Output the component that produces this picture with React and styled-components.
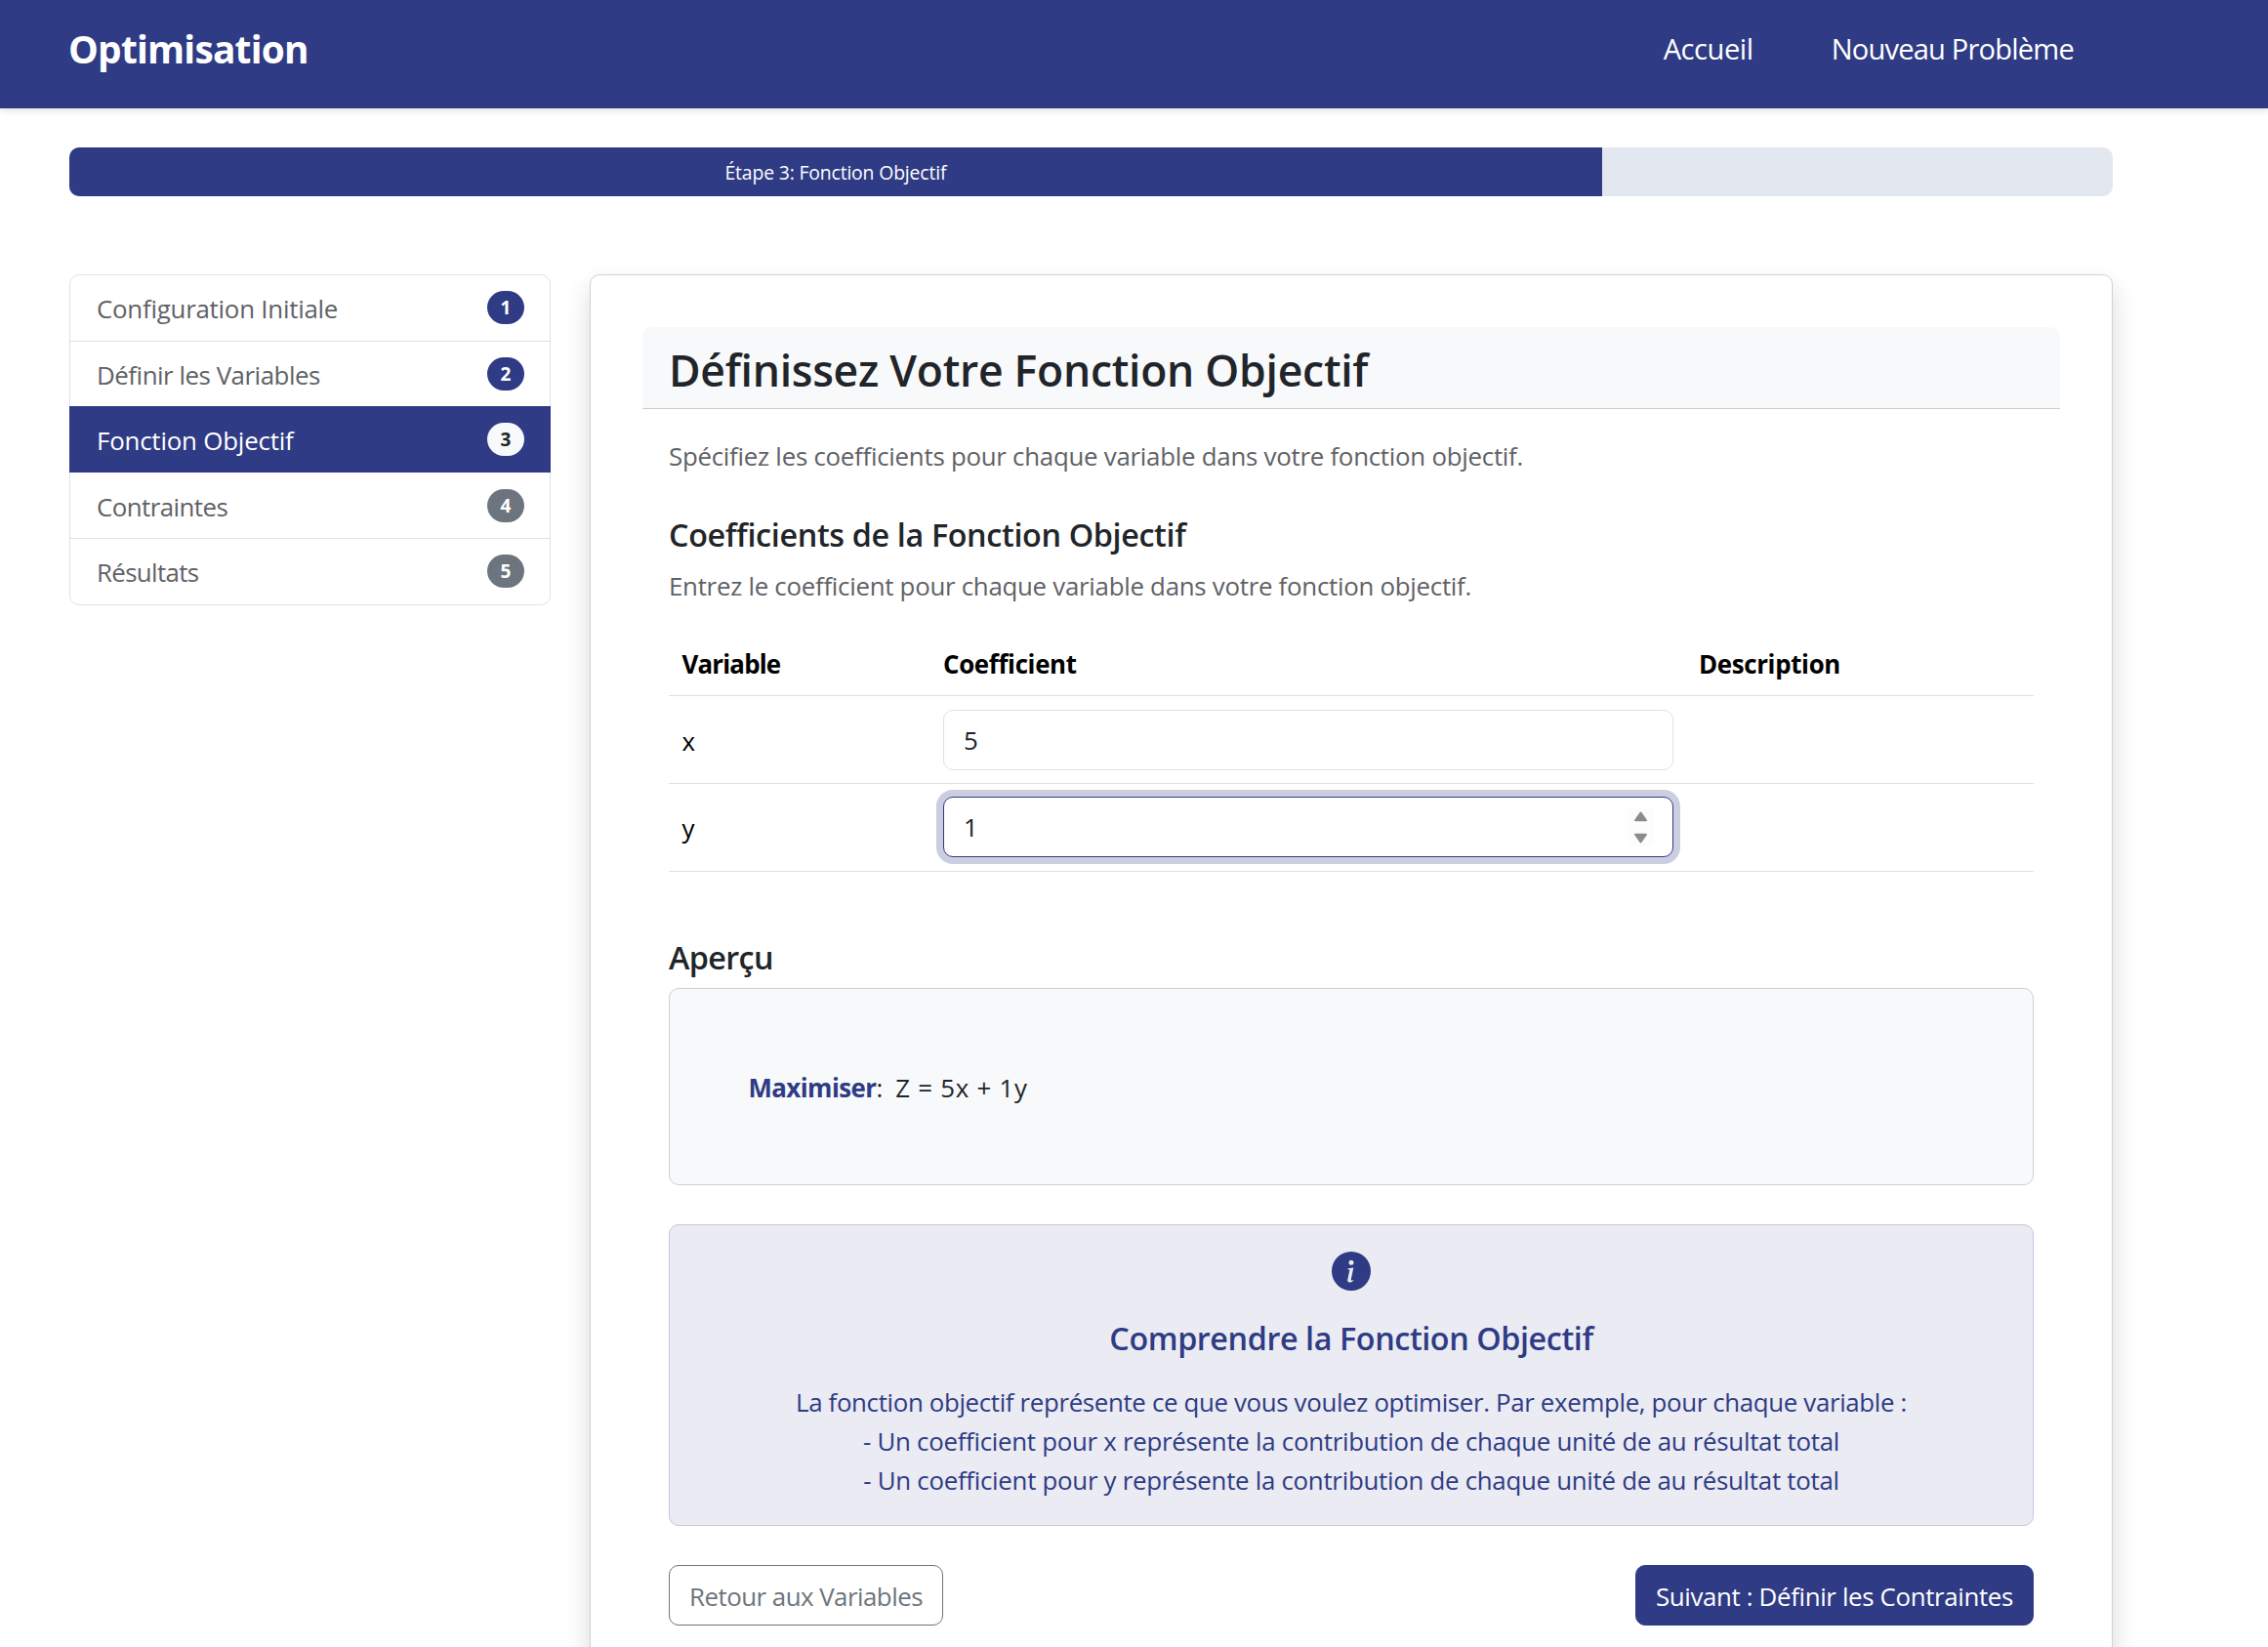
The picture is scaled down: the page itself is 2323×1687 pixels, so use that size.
import React from "react";
import styled, { createGlobalStyle, css } from "styled-components";
import { BsInfoCircleFill } from "react-icons/bs";

const navy = "#2f3b84";

const Global = createGlobalStyle`
  *, *::before, *::after { box-sizing: border-box; }
  html, body { margin: 0; background: #fff; }
  body {
    font-family: "Open Sans", "Noto Sans", sans-serif;
    font-size: 25.87px;
    line-height: 40px;
    color: #212529;
    overflow: hidden;
  }
`;

const tracking = css`
  letter-spacing: ${(p) => p.$ls || 0}px;
  white-space: nowrap;
`;

const Page = styled.div`
  height: 1687px;
  overflow: hidden;
`;

const Header = styled.header`
  display: flex;
  align-items: center;
  justify-content: space-between;
  height: 111px;
  padding: 0 199px 11px 70px;
  background: ${navy};
  color: #fff;
  box-shadow: 0 3px 7px rgba(0, 0, 0, 0.1);
`;

const Brand = styled.a`
  ${tracking}
  font-size: 38.8px;
  font-weight: 700;
`;

const Nav = styled.nav`
  display: flex;
  gap: 80px;
`;

const NavLink = styled.a`
  ${tracking}
  font-size: 29.1px;
`;

const Main = styled.main`
  width: 2093px;
  margin: 40px 0 0 71px;
`;

const Progress = styled.div`
  height: 50px;
  border-radius: 10px;
  background: #e3e8f0;
  overflow: hidden;
`;

const ProgressBar = styled.div`
  ${tracking}
  display: flex;
  align-items: center;
  justify-content: center;
  width: ${(p) => p.$value}%;
  height: 100%;
  padding-top: 2px;
  background: ${navy};
  color: #fff;
  font-size: 19.4px;
`;

const Columns = styled.div`
  display: flex;
  align-items: flex-start;
  gap: 40px;
  margin-top: 80px;
`;

const Steps = styled.ul`
  flex: none;
  width: 493px;
  margin: 0;
  padding: 0;
  list-style: none;
  border: 1px solid #dee2e6;
  border-radius: 10px;
`;

const Step = styled.li`
  display: flex;
  align-items: center;
  justify-content: space-between;
  height: ${(p) => p.$height}px;
  padding: 0 26px 0 27px;
  color: #5f6266;
  border-bottom: ${(p) => (p.$divider ? "1px solid #dee2e6" : "0")};
  ${(p) =>
    p.$active &&
    css`
      margin: 0 -1px;
      padding: 0 27px 0 28px;
      background: ${navy};
      color: #fff;
    `}
`;

const StepLabel = styled.span`
  ${tracking}
  padding-top: ${(p) => p.$top || 1}px;
`;

const tones = {
  done: { bg: navy, fg: "#fff" },
  current: { bg: "#f8f9fa", fg: "#212529" },
  todo: { bg: "#6c757d", fg: "#fff" },
};

const Badge = styled.span`
  display: flex;
  align-items: center;
  justify-content: center;
  width: 38px;
  height: 34px;
  margin-bottom: ${(p) => (p.$raised ? 1 : 0)}px;
  padding-top: 1px;
  border-radius: 17px;
  background: ${(p) => tones[p.$tone].bg};
  color: ${(p) => tones[p.$tone].fg};
  font-size: 19px;
  font-weight: 700;
  line-height: 1;
`;

const Card = styled.section`
  flex: none;
  width: 1560px;
  height: 1480px;
  padding: 53px;
  border: 1px solid #d2d2d3;
  border-radius: 10px;
  background: #fff;
  box-shadow: 0 13px 27px rgba(0, 0, 0, 0.15);
`;

const CardHeader = styled.div`
  height: 84px;
  padding: 4px 26px 0 27px;
  border-bottom: 1px solid #c9cbcd;
  border-radius: 10px 10px 0 0;
  background: #f8f9fb;
`;

const Title = styled.h2`
  ${tracking}
  margin: 0;
  font-size: 44.5px;
  font-weight: 600;
  line-height: 80px;
`;

const CardBody = styled.div`
  padding: 28px 27px 0;
`;

const Lead = styled.p`
  ${tracking}
  margin: 0;
  color: #5f6266;
`;

const Subtitle = styled.h3`
  ${tracking}
  margin: ${(p) => p.$top}px 0 ${(p) => p.$bottom}px;
  font-size: 32.33px;
  font-weight: 600;
  line-height: 40px;
`;

const Table = styled.div`
  margin-top: 27px;
  color: #000;
`;

const Row = styled.div`
  display: grid;
  grid-template-columns: 268px 774px 1fr;
  align-items: center;
  height: ${(p) => (p.$head ? 66 : 90)}px;
  padding-bottom: ${(p) => (p.$last ? 2 : 0)}px;
  border-bottom: 1px solid #dee0e4;
  font-weight: ${(p) => (p.$head ? 700 : 400)};
`;

const Cell = styled.div`
  ${tracking}
  padding: 0 13px;
`;

const NameCell = styled(Cell)`
  padding: ${(p) => (p.$ls ? 0 : 2)}px 13px 0 13.5px;
`;

const Field = styled.div`
  display: flex;
  align-items: center;
  width: 748px;
  height: 62px;
  padding: 0 20px;
  border: 1px solid ${(p) => (p.$focused ? navy : "#dee2e6")};
  border-radius: 10px;
  background: #fff;
  box-shadow: ${(p) => (p.$focused ? "0 0 0 7px #cbcee1" : "none")};
`;

const Input = styled.input`
  flex: 1;
  min-width: 0;
  height: 40px;
  padding: 0;
  border: 0;
  outline: 0;
  background: transparent;
  color: #212529;
  font: inherit;
`;

const Spinner = styled.span`
  display: flex;
  width: 25px;
  height: 40px;
  background: #fcfcfc;
`;

const Preview = styled.div`
  display: flex;
  align-items: center;
  height: 202px;
  padding: 1px 80px 0 80.5px;
  border: 1px solid #cdcfd1;
  border-radius: 10px;
  background: #f8f9fb;
`;

const Goal = styled.strong`
  ${tracking}
  color: ${navy};
`;

const Formula = styled.span`
  ${tracking}
  margin-left: 13px;
`;

const Info = styled.aside`
  display: flex;
  flex-direction: column;
  align-items: center;
  height: 309px;
  margin-top: 40px;
  padding-top: 27px;
  border: 1px solid #c5c7dd;
  border-radius: 10px;
  background: #eaebf3;
  color: ${navy};
`;

const InfoTitle = styled(Subtitle)`
  margin: 28px 0 26px;
`;

const InfoLine = styled.p`
  ${tracking}
  margin: 0;
`;

const Actions = styled.div`
  display: flex;
  justify-content: space-between;
  margin-top: 40px;
`;

const Button = styled.button`
  ${tracking}
  width: ${(p) => p.$width}px;
  height: 62px;
  padding: 2px 0 0;
  border: 1px solid ${(p) => (p.$primary ? navy : "#6c757d")};
  border-radius: 10px;
  background: ${(p) => (p.$primary ? navy : "#fff")};
  color: ${(p) => (p.$primary ? "#fff" : "#6c757d")};
  font-family: inherit;
  font-size: 25.87px;
  line-height: 40px;
`;

const steps = [
  { label: "Configuration Initiale", ls: -0.24, tone: "done", height: 68, divider: true, raised: true },
  { label: "Définir les Variables", ls: -0.47, tone: "done", height: 66 },
  { label: "Fonction Objectif", ls: -0.196, tone: "current", height: 68, active: true },
  { label: "Contraintes", ls: -0.56, tone: "todo", height: 68, divider: true, top: 2 },
  { label: "Résultats", ls: -0.66, tone: "todo", height: 67, raised: true },
];

function Arrows() {
  return (
    <svg width="25" height="40" viewBox="0 0 25 40" fill="#8b8b8b" stroke="#8b8b8b" strokeWidth="2" strokeLinejoin="round">
      <path d="M12.5 5.5 L18 13.3 H7 Z" />
      <path d="M12.5 35.5 L18 27.7 H7 Z" />
    </svg>
  );
}

export default function App() {
  return (
    <Page>
      <Global />
      <Header>
        <Brand $ls={-0.77}>Optimisation</Brand>
        <Nav>
          <NavLink $ls={-0.45}>Accueil</NavLink>
          <NavLink $ls={-0.81}>Nouveau Problème</NavLink>
        </Nav>
      </Header>
      <Main>
        <Progress>
          <ProgressBar $value={75} $ls={-0.166}>Étape 3: Fonction Objectif</ProgressBar>
        </Progress>
        <Columns>
          <Steps>
            {steps.map((s, i) => (
              <Step key={s.label} $height={s.height} $divider={s.divider} $active={s.active}>
                <StepLabel $ls={s.ls} $top={s.top}>{s.label}</StepLabel>
                <Badge $tone={s.tone} $raised={s.raised}>{i + 1}</Badge>
              </Step>
            ))}
          </Steps>
          <Card>
            <CardHeader>
              <Title $ls={-0.27}>Définissez Votre Fonction Objectif</Title>
            </CardHeader>
            <CardBody>
              <Lead $ls={-0.265}>
                Spécifiez les coefficients pour chaque variable dans votre fonction objectif.
              </Lead>
              <Subtitle $top={40} $bottom={13} $ls={-0.36}>Coefficients de la Fonction Objectif</Subtitle>
              <Lead $ls={-0.28}>
                Entrez le coefficient pour chaque variable dans votre fonction objectif.
              </Lead>
              <Table>
                <Row $head>
                  <NameCell $ls={-0.8}>Variable</NameCell>
                  <Cell $ls={-0.34}>Coefficient</Cell>
                  <Cell $ls={-0.34}>Description</Cell>
                </Row>
                <Row>
                  <NameCell>x</NameCell>
                  <Cell>
                    <Field><Input defaultValue="5" /></Field>
                  </Cell>
                </Row>
                <Row $last>
                  <NameCell>y</NameCell>
                  <Cell>
                    <Field $focused>
                      <Input defaultValue="1" />
                      <Spinner><Arrows /></Spinner>
                    </Field>
                  </Cell>
                </Row>
              </Table>
              <Subtitle $top={67} $bottom={12} $ls={-0.627}>Aperçu</Subtitle>
              <Preview>
                <Goal $ls={-0.57}>Maximiser</Goal>:
                <Formula $ls={0.75}>Z = 5x + 1y</Formula>
              </Preview>
              <Info>
                <BsInfoCircleFill size={40} />
                <InfoTitle as="h4" $ls={-0.42}>Comprendre la Fonction Objectif</InfoTitle>
                <InfoLine $ls={-0.35}>
                  La fonction objectif représente ce que vous voulez optimiser. Par exemple, pour chaque variable :
                </InfoLine>
                <InfoLine $ls={-0.285}>
                  - Un coefficient pour x représente la contribution de chaque unité de au résultat total
                </InfoLine>
                <InfoLine $ls={-0.285}>
                  - Un coefficient pour y représente la contribution de chaque unité de au résultat total
                </InfoLine>
              </Info>
              <Actions>
                <Button $width={281} $ls={-0.52}>Retour aux Variables</Button>
                <Button $primary $width={408} $ls={-0.357}>Suivant : Définir les Contraintes</Button>
              </Actions>
            </CardBody>
          </Card>
        </Columns>
      </Main>
    </Page>
  );
}
